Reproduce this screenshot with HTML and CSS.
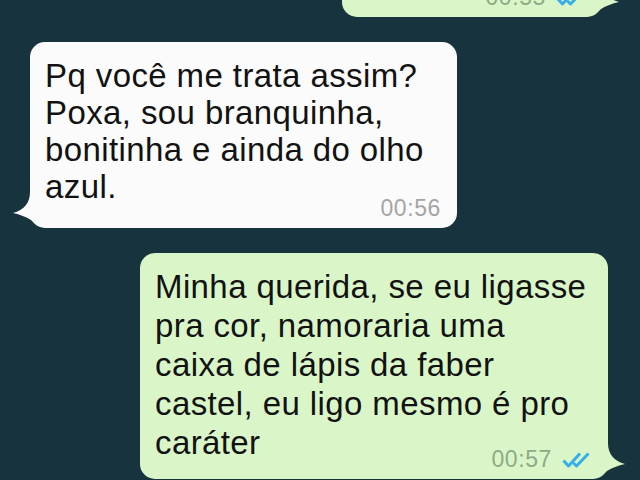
FILE: index.html
```html
<!DOCTYPE html>
<html lang="pt-BR">
<head>
  <meta charset="UTF-8">
  <meta name="viewport" content="width=device-width, initial-scale=1.0">
  <title>Conversa</title>
  <link rel="stylesheet" href="styles.css">
</head>
<body>

  <div class="chat">

    <!-- previous message, mostly scrolled off -->
    <div class="bubble out first">
      <div class="meta">
        <span class="time">00:55</span>
        <svg class="ticks" viewBox="0 0 28 17" width="28" height="17"><path d="M1.5 9.5 L6.5 15 L18 2.5 M11.5 12 L14.5 15 L26.5 2.5"/></svg>
      </div>
      <svg class="tail" viewBox="0 0 40 40" width="40" height="40"><path d="M18 0 L18 4 C18 15 12 22 1 25 C8 26.5 14 29 19 32 C24 37 30 40 40 40 L40 0 Z"/></svg>
    </div>

    <div class="bubble in">
      <p class="text">Pq você me trata assim?<br>Poxa, sou branquinha,<br>bonitinha e ainda do olho<br>azul.</p>
      <div class="meta">
        <span class="time">00:56</span>
      </div>
      <svg class="tail" viewBox="0 0 40 40" width="40" height="40"><path d="M18 0 L18 4 C18 15 12 22 1 25 C8 26.5 14 29 19 32 C24 37 30 40 40 40 L40 0 Z"/></svg>
    </div>

    <div class="bubble out last">
      <p class="text">Minha querida, se eu ligasse<br>pra cor, namoraria uma<br>caixa de lápis da faber<br>castel, eu ligo mesmo é pro<br>caráter</p>
      <div class="meta">
        <span class="time">00:57</span>
        <svg class="ticks" viewBox="0 0 28 17" width="28" height="17"><path d="M1.5 9.5 L6.5 15 L18 2.5 M11.5 12 L14.5 15 L26.5 2.5"/></svg>
      </div>
      <svg class="tail" viewBox="0 0 40 40" width="40" height="40"><path d="M18 0 L18 4 C18 15 12 22 1 25 C8 26.5 14 29 19 32 C24 37 30 40 40 40 L40 0 Z"/></svg>
    </div>

  </div>

</body>
</html>
```

FILE: styles.css
```css
* {
  margin: 0;
  padding: 0;
  box-sizing: border-box;
}

body {
  font-family: 'Liberation Sans', Arial, sans-serif;
  background-color: #17333e;
  color: #121212;
  height: 480px;
  overflow: hidden;
}

.chat {
  display: flex;
  flex-direction: column;
  align-items: flex-start;
}

.bubble {
  position: relative;
  border-radius: 15px;
  padding: 15px 16px 8px 15px;
}

.bubble.in {
  background-color: #fbfbfb;
  width: 427px;
  margin-left: 30px;
  margin-top: 25px;
}

.bubble.out {
  background-color: #daf6c8;
  align-self: flex-end;
}

.bubble.first {
  width: 260px;
  margin-right: 38px;
  margin-top: -44px;
  padding-top: 38px;
}

.bubble.last {
  width: 468px;
  margin-right: 32px;
  margin-top: 25px;
  padding-top: 14px;
}

.text {
  font-size: 33px;
  letter-spacing: 0.4px;
  line-height: 37px;
}

.last .text {
  line-height: 39px;
}

.meta {
  display: flex;
  justify-content: flex-end;
  align-items: flex-end;
  gap: 10px;
  margin-top: -8px;
  line-height: 23px;
}

.out .meta {
  margin-right: 2px;
}

.last .meta {
  margin-top: -14px;
}

.time {
  font-size: 23px;
  letter-spacing: 0.6px;
  color: #a5a5a5;
}

.out .time {
  color: #8eab87;
}

.ticks {
  margin-bottom: 3px;
}

.ticks path {
  fill: none;
  stroke: #37aee8;
  stroke-width: 3;
  stroke-linejoin: round;
}

/* tail sits behind the bubble so it never covers the text */
.tail {
  position: absolute;
  bottom: 0;
  left: -18px;
  z-index: -1;
}

.in .tail path {
  fill: #fbfbfb;
}

.out .tail {
  left: auto;
  right: -18px;
  transform: scaleX(-1);
}

.out .tail path {
  fill: #daf6c8;
}
```
